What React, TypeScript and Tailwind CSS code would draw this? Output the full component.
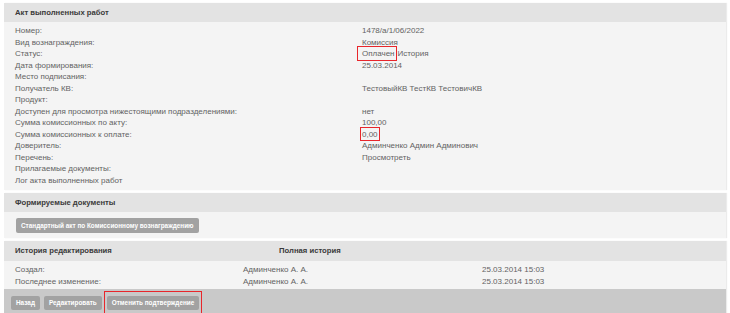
const rows: { label: string; value?: React.ReactNode }[] = [
  { label: "Номер:", value: "1478/а/1/06/2022" },
  { label: "Вид вознаграждения:", value: "Комиссия" },
  {
    label: "Статус:",
    value: (
      <>
        <Marked className="-left-[5px] -right-[2px] -top-[2px] -bottom-[1px]">Оплачен</Marked>
        <span className="ml-[3px]">История</span>
      </>
    ),
  },
  { label: "Дата формирования:", value: "25.03.2014" },
  { label: "Место подписания:" },
  { label: "Получатель КВ:", value: "ТестовыйКВ ТестКВ ТестовичКВ" },
  { label: "Продукт:" },
  { label: "Доступен для просмотра нижестоящими подразделениями:", value: "нет" },
  { label: "Сумма комиссионных по акту:", value: "100,00" },
  {
    label: "Сумма комиссионных к оплате:",
    value: <Marked className="-left-[2px] -right-[2px] -top-[2px] -bottom-[1px]">0,00</Marked>,
  },
  { label: "Доверитель:", value: "Админченко Админ Админович" },
  { label: "Перечень:", value: "Просмотреть" },
  { label: "Прилагаемые документы:" },
  { label: "Лог акта выполненных работ" },
];

const history = [
  { label: "Создал:", who: "Админченко А. А.", when: "25.03.2014 15:03" },
  { label: "Последнее изменение:", who: "Админченко А. А.", when: "25.03.2014 15:03" },
];

function Marked({ children, className }: { children: React.ReactNode; className: string }) {
  return (
    <span className="relative inline-block">
      {children}
      <span className={`pointer-events-none absolute border border-[#e8262b] ${className}`} />
    </span>
  );
}

function Button({ children }: { children: React.ReactNode }) {
  return (
    <span className="inline-flex h-[14px] items-center rounded-[2px] bg-[#a2a2a2] px-[5px] text-[6.4px] font-bold text-white">
      {children}
    </span>
  );
}

function Header({ children }: { children: React.ReactNode }) {
  return (
    <div className="flex h-[19px] items-center bg-[#e3e3e3] pl-[11px] text-[7.7px] font-bold text-[#3a3a3a]">
      {children}
    </div>
  );
}

export default function App() {
  return (
    <div
      className="min-h-[313px] w-[730px] overflow-hidden bg-white px-[4px] pt-[3px] text-[8px] text-[#636363]"
      style={{ fontFamily: '"Liberation Sans", Arial, sans-serif' }}
    >
      <section className="shadow-[1px_0_1px_rgba(0,0,0,0.08)]">
        <Header>Акт выполненных работ</Header>
        <div className="bg-[#f4f4f4] pb-[4px] pt-[3px] pl-[11px]">
          {rows.map((row) => (
            <div key={row.label} className="grid h-[11.5px] grid-cols-[347px_1fr] items-center leading-[11.5px]">
              <span>{row.label}</span>
              <span>{row.value}</span>
            </div>
          ))}
        </div>
      </section>

      <section className="mt-[3px] shadow-[1px_0_1px_rgba(0,0,0,0.08)]">
        <Header>Формируемые документы</Header>
        <div className="h-[26px] bg-[#f4f4f4] pl-[12px] pt-[6px]">
          <span className="inline-flex h-[15px] items-center rounded-[2px] bg-[#a2a2a2] px-[5px] text-[6.4px] font-bold text-white">
            Стандартный акт по Комиссионному вознаграждению
          </span>
        </div>
      </section>

      <section className="mt-[3px] shadow-[1px_0_1px_rgba(0,0,0,0.08)]">
        <div className="grid h-[20px] grid-cols-[264px_1fr] items-center bg-[#e3e3e3] pl-[11px] text-[7.7px] font-bold text-[#3a3a3a]">
          <span>История редактирования</span>
          <span>Полная история</span>
        </div>
        <div className="h-[28px] bg-[#f4f4f4] pl-[11px] pt-[3px]">
          {history.map((h) => (
            <div key={h.label} className="grid h-[11.5px] grid-cols-[228px_239px_1fr] items-center leading-[11.5px]">
              <span>{h.label}</span>
              <span>{h.who}</span>
              <span>{h.when}</span>
            </div>
          ))}
        </div>
        <div className="flex h-[26px] items-start gap-[4px] bg-[#c9c9c9] pl-[7px] pt-[7px]">
          <Button>Назад</Button>
          <Button>Редактировать</Button>
          <span className="relative ml-[1px] inline-flex">
            <Button>Отменить подтверждение</Button>
            <span className="pointer-events-none absolute -bottom-[5px] -left-[3px] -right-[3px] -top-[5px] border border-[#e8262b]" />
          </span>
        </div>
      </section>
    </div>
  );
}
